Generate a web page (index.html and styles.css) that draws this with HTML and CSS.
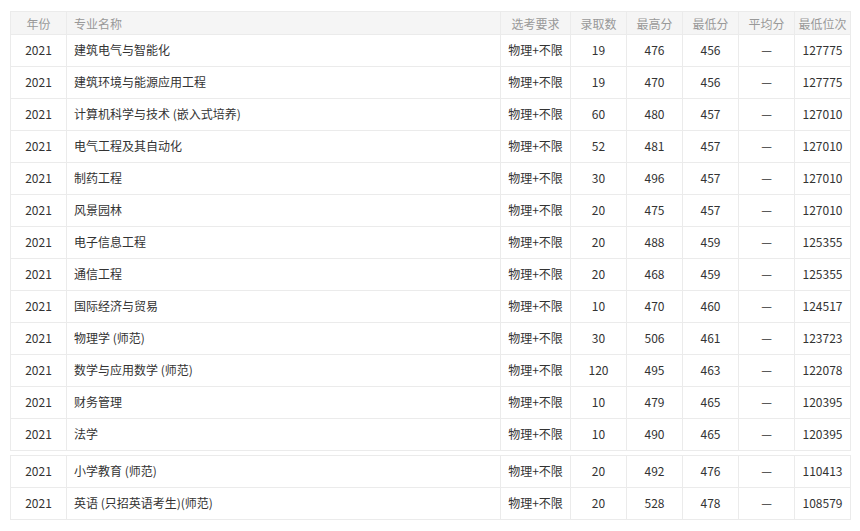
FILE: index.html
```html
<!DOCTYPE html>
<html lang="zh-CN">
<head>
<meta charset="utf-8">
<link rel="stylesheet" href="styles.css">
</head>
<body>
<div class="wrap">
<table class="grid">
<colgroup><col class="c-year"><col class="c-name"><col class="c-req"><col class="c-n"><col class="c-n"><col class="c-n"><col class="c-n"><col class="c-n"></colgroup>
<thead>
<tr><th>年份</th><th class="left">专业名称</th><th>选考要求</th><th>录取数</th><th>最高分</th><th>最低分</th><th>平均分</th><th>最低位次</th></tr>
</thead>
<tbody>
<tr><td>2021</td><td class="left">建筑电气与智能化</td><td>物理+不限</td><td>19</td><td>476</td><td>456</td><td>—</td><td>127775</td></tr>
<tr><td>2021</td><td class="left">建筑环境与能源应用工程</td><td>物理+不限</td><td>19</td><td>470</td><td>456</td><td>—</td><td>127775</td></tr>
<tr><td>2021</td><td class="left">计算机科学与技术 (嵌入式培养)</td><td>物理+不限</td><td>60</td><td>480</td><td>457</td><td>—</td><td>127010</td></tr>
<tr><td>2021</td><td class="left">电气工程及其自动化</td><td>物理+不限</td><td>52</td><td>481</td><td>457</td><td>—</td><td>127010</td></tr>
<tr><td>2021</td><td class="left">制药工程</td><td>物理+不限</td><td>30</td><td>496</td><td>457</td><td>—</td><td>127010</td></tr>
<tr><td>2021</td><td class="left">风景园林</td><td>物理+不限</td><td>20</td><td>475</td><td>457</td><td>—</td><td>127010</td></tr>
<tr><td>2021</td><td class="left">电子信息工程</td><td>物理+不限</td><td>20</td><td>488</td><td>459</td><td>—</td><td>125355</td></tr>
<tr><td>2021</td><td class="left">通信工程</td><td>物理+不限</td><td>20</td><td>468</td><td>459</td><td>—</td><td>125355</td></tr>
<tr><td>2021</td><td class="left">国际经济与贸易</td><td>物理+不限</td><td>10</td><td>470</td><td>460</td><td>—</td><td>124517</td></tr>
<tr><td>2021</td><td class="left">物理学 (师范)</td><td>物理+不限</td><td>30</td><td>506</td><td>461</td><td>—</td><td>123723</td></tr>
<tr><td>2021</td><td class="left">数学与应用数学 (师范)</td><td>物理+不限</td><td>120</td><td>495</td><td>463</td><td>—</td><td>122078</td></tr>
<tr><td>2021</td><td class="left">财务管理</td><td>物理+不限</td><td>10</td><td>479</td><td>465</td><td>—</td><td>120395</td></tr>
<tr><td>2021</td><td class="left">法学</td><td>物理+不限</td><td>10</td><td>490</td><td>465</td><td>—</td><td>120395</td></tr>
</tbody>
</table>
<table class="grid second">
<colgroup><col class="c-year"><col class="c-name"><col class="c-req"><col class="c-n"><col class="c-n"><col class="c-n"><col class="c-n"><col class="c-n"></colgroup>
<tbody>
<tr><td>2021</td><td class="left">小学教育 (师范)</td><td>物理+不限</td><td>20</td><td>492</td><td>476</td><td>—</td><td>110413</td></tr>
<tr><td>2021</td><td class="left">英语 (只招英语考生)(师范)</td><td>物理+不限</td><td>20</td><td>528</td><td>478</td><td>—</td><td>108579</td></tr>
</tbody>
</table>
</div>
</body>
</html>
```
FILE: styles.css
```css
html, body {
  margin: 0;
  padding: 0;
  background: #fff;
}
body {
  font-family: "Noto Sans CJK SC", "Noto Sans", sans-serif;
  font-size: 12px;
  line-height: 16px;
  color: #333;
}
.wrap {
  padding: 11px 10px 0 10px;
}
.grid {
  width: 840px;
  border-collapse: collapse;
  table-layout: fixed;
}
.second {
  margin-top: 4px;
}
.c-year { width: 56px; }
.c-name { width: 434px; }
.c-req { width: 70px; }
.c-n { width: 56px; }
.grid th, .grid td {
  border: 1px solid #ebebeb;
  text-align: center;
  padding: 0;
  white-space: nowrap;
  overflow: hidden;
}
.grid th {
  height: 20px;
  padding-top: 2px;
  background: #f5f5f5;
  color: #999;
  font-weight: normal;
}
.grid td {
  height: 29px;
  padding-bottom: 2px;
}
.grid .left {
  text-align: left;
  padding-left: 7px;
}
```
